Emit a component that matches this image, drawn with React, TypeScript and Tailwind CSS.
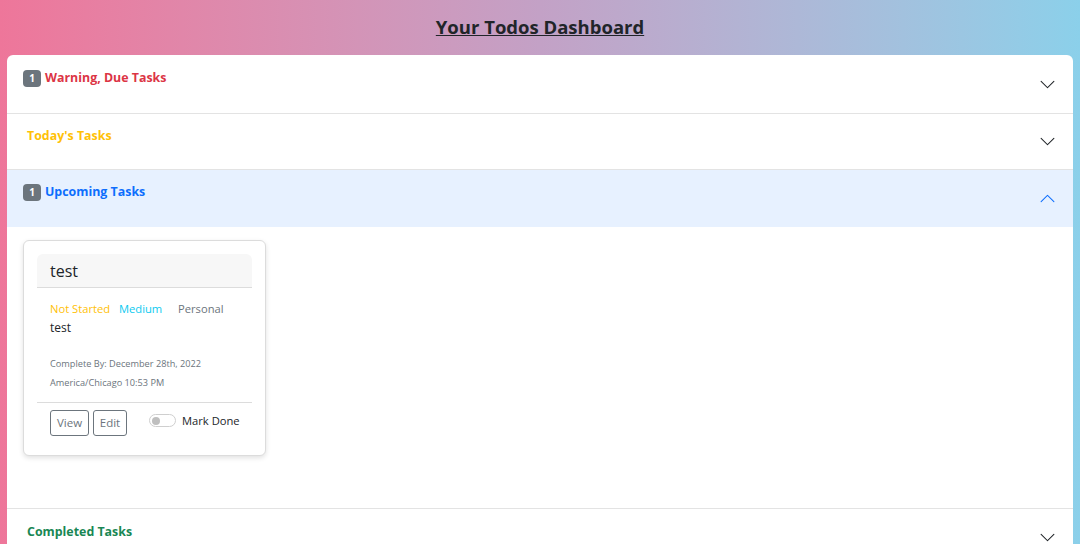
import React from "react";

interface Section {
  title: string;
  color: string;
  count?: number;
  open?: boolean;
  height: string;
}

const sections: Section[] = [
  { title: "Warning, Due Tasks", color: "text-[#dc3545]", count: 1, height: "h-[58px]" },
  { title: "Today's Tasks", color: "text-[#ffc107]", height: "h-[55px]" },
  { title: "Upcoming Tasks", color: "text-[#0d6efd]", count: 1, open: true, height: "h-[57px]" },
  { title: "Completed Tasks", color: "text-[#198754]", height: "h-[57px]" },
];

const Chevron = ({ up }: { up?: boolean }) => (
  <svg
    viewBox="0 0 16 16"
    className={`w-[17px] h-[17px] ${up ? "rotate-180 text-[#0d6efd]" : "text-[#212529]"}`}
    fill="currentColor"
  >
    <path
      fillRule="evenodd"
      d="M1.646 4.646a.5.5 0 0 1 .708 0L8 10.293l5.646-5.647a.5.5 0 0 1 .708.708l-6 6a.5.5 0 0 1-.708 0l-6-6a.5.5 0 0 1 0-.708z"
    />
  </svg>
);

const TodoCard = () => (
  <div className="w-[243px] h-[216px] border border-[#dcdcdc] rounded-md shadow-[0_2px_5px_rgba(0,0,0,0.12)] p-[13px] bg-white">
    <div className="h-[34px] bg-[#f7f7f7] border-b border-[#dcdcdc] rounded-t-md flex items-center px-[13px]">
      <span className="text-[16px] text-[#212529]">test</span>
    </div>
    <div className="px-[13px] pt-[12px]">
      <div className="flex text-[11.2px] leading-[17px]">
        <span className="text-[#ffc107] w-[69px]">Not Started</span>
        <span className="text-[#0dcaf0] w-[59px]">Medium</span>
        <span className="text-[#6c757d]">Personal</span>
      </div>
      <div className="text-[12px] leading-[18px] mt-[2px] text-[#212529]">test</div>
      <div className="mt-[17px] text-[9.2px] leading-[19px] text-[#6c757d]">
        <div>Complete By: December 28th, 2022</div>
        <div>America/Chicago 10:53 PM</div>
      </div>
    </div>
    <div className="mt-[10px] border-t border-[#dcdcdc]" />
    <div className="flex items-center px-[13px] pt-[7px]">
      <button className="shrink-0 h-[26px] w-[39px] border border-[#6c757d] rounded-[3px] text-[11.5px] text-[#6c757d]">
        View
      </button>
      <button className="shrink-0 ml-[4px] h-[26px] w-[34px] border border-[#6c757d] rounded-[3px] text-[11.5px] text-[#6c757d]">
        Edit
      </button>
      <div className="shrink-0 ml-[22px] -mt-[4px] flex items-center whitespace-nowrap">
        <span className="w-[27px] h-[13px] rounded-full border border-[#cfcfcf] flex items-center px-[2px]">
          <span className="w-[8px] h-[8px] rounded-full bg-[#bfbfbf]" />
        </span>
        <span className="ml-[6px] text-[11.2px] text-[#212529]">Mark Done</span>
      </div>
    </div>
  </div>
);

export default function App() {
  return (
    <div className="h-[544px] overflow-hidden bg-gradient-to-r from-[#ee769a] via-[#c3a1c6] to-[#8bd0ea] px-[7px] font-['Open_Sans',sans-serif]">
      <h1 className="h-[55px] flex items-center justify-center text-[18.5px] font-bold underline text-[#212529] pb-[1px]">
        Your Todos Dashboard
      </h1>
      <div className="bg-white rounded-t-md">
        {sections.map((s, i) => (
          <div key={s.title} className="border-b border-[#e3e3e3]">
            <div
              className={`${s.height} flex justify-between items-center pr-[17px] ${
                s.open ? "bg-[#e7f1ff]" : ""
              }`}
            >
              <div
                className={`self-start flex items-center ${i === 0 ? "pt-[14px]" : i === 3 ? "pt-[14px]" : "pt-[13px]"} ${
                  s.count ? "pl-[16px]" : "pl-[20px]"
                }`}
              >
                {s.count ? (
                  <span className="w-[18px] h-[17px] mr-[4px] rounded-[4px] bg-[#6c757d] text-white text-[10px] leading-none font-bold flex items-center justify-center">
                    {s.count}
                  </span>
                ) : null}
                <span className={`text-[12.4px] leading-[18px] font-bold ${s.color}`}>{s.title}</span>
              </div>
              <Chevron up={s.open} />
            </div>
            {s.open ? (
              <div className="h-[281px] pt-[13px] pl-[16px]">
                <TodoCard />
              </div>
            ) : null}
          </div>
        ))}
      </div>
    </div>
  );
}
